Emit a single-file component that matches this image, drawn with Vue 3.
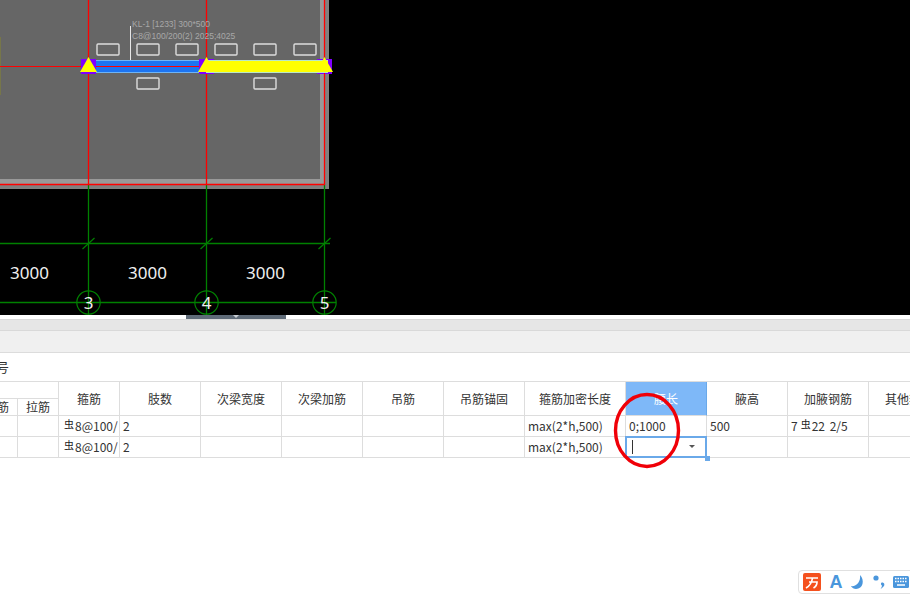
<template>
  <div class="page">
    <!-- drawing canvas -->
    <svg class="canvas" width="910" height="315" viewBox="0 0 910 315">
      <rect x="0" y="0" width="329" height="189" fill="#808080" />
      <rect x="0" y="0" width="324" height="184" fill="#999999" />
      <rect x="0" y="0" width="320" height="179" fill="#666666" />
      <rect x="0" y="37" width="1" height="58" fill="#76764a" />

      <g v-for="x in axes" :key="x">
        <line :x1="x" y1="0" :x2="x" y2="184" stroke="#ff0000" stroke-width="1.3" />
        <line :x1="x" y1="184" :x2="x" y2="315" stroke="#008000" stroke-width="1.3" />
      </g>
      <line x1="0" y1="184.5" x2="325" y2="184.5" stroke="#ff0000" stroke-width="1.3" />
      <line x1="0" y1="243.5" x2="330" y2="243.5" stroke="#008000" stroke-width="1.3" />
      <line x1="0" y1="302.5" x2="336" y2="302.5" stroke="#008000" stroke-width="1.3" />
      <line
        v-for="x in axes"
        :key="'t' + x"
        :x1="x - 6"
        y1="249"
        :x2="x + 6"
        y2="238"
        stroke="#008000"
        stroke-width="1.2"
      />

      <text v-for="x in spans" :key="'s' + x" class="dim" :x="x" y="279">3000</text>
      <g v-for="(x, i) in axes" :key="'c' + x">
        <circle :cx="x" cy="302.5" r="11.7" fill="none" stroke="#008000" stroke-width="1.2" />
        <text class="dim" :x="x" y="309">{{ i + 3 }}</text>
      </g>

      <!-- beams -->
      <rect x="96" y="60" width="110" height="13" fill="#6fb4f5" />
      <rect x="96" y="61" width="110" height="11" fill="#1c74f2" />
      <line x1="0" y1="66.5" x2="206" y2="66.5" stroke="#ff0000" stroke-width="1.2" />
      <rect v-for="b in supports" :key="'p' + b" :x="b - 7.5" y="59" width="15" height="15" fill="#8000ff" />
      <line x1="324.5" y1="59" x2="324.5" y2="74" stroke="#ff0000" />
      <rect x="206" y="60" width="122" height="13" fill="#b8e8c8" />
      <rect x="206" y="61" width="122" height="11" fill="#ffff00" />
      <polygon
        v-for="b in supports"
        :key="'y' + b"
        :points="`${b},57 ${b - 8.5},72 ${b + 8.5},72`"
        fill="#ffff00"
      />

      <rect
        v-for="(r, i) in rebars"
        :key="'r' + i"
        :x="r.x"
        :y="r.y"
        width="22"
        height="11"
        rx="1"
        fill="none"
        stroke="#dddddd"
        stroke-width="1.4"
      />

      <line x1="130.5" y1="26" x2="130.5" y2="60" stroke="#e6e6e6" />
      <text class="note" x="132" y="27">KL-1 [1233] 300*500</text>
      <text class="note" x="132" y="39">C8@100/200(2) 2025;4025</text>
    </svg>

    <div class="splitter"></div>
    <div class="tabs"></div>
    <div class="toolbar"></div>
    <div class="title"><span>号</span></div>

    <div class="table-wrap">
      <table class="grid">
        <colgroup>
          <col v-for="(c, i) in columns" :key="i" :style="{ width: c + 'px' }" />
        </colgroup>
        <thead>
          <tr>
            <th colspan="2"></th>
            <th
              v-for="h in headers"
              :key="h"
              rowspan="2"
              :class="{ active: h === '腰长' }"
            >
              {{ h }}
            </th>
          </tr>
          <tr>
            <th>腰筋</th>
            <th>拉筋</th>
          </tr>
        </thead>
        <tbody>
          <tr v-for="(row, i) in rows" :key="i">
            <td></td>
            <td></td>
            <td><span class="steel">虫</span>8@100/</td>
            <td>2</td>
            <td></td>
            <td></td>
            <td></td>
            <td></td>
            <td>max(2*h,500)</td>
            <td class="edit-host">
              {{ row.len }}
              <div v-if="row.editing" class="editor">
                <i class="caret"></i>
                <i class="arrow"></i>
                <i class="handle"></i>
              </div>
            </td>
            <td>{{ row.high }}</td>
            <td class="bar-cell">
              <template v-if="row.bar">7<span class="steel">虫</span>22 2/5</template>
            </td>
            <td></td>
          </tr>
        </tbody>
      </table>
    </div>

    <!-- collapse handle of the splitter -->
    <div class="collapse"><i></i></div>

    <!-- red hand-drawn mark -->
    <svg class="mark" width="910" height="596" viewBox="0 0 910 596">
      <ellipse cx="647" cy="430.5" rx="31.5" ry="36" fill="none" stroke="#f00008" stroke-width="3.4" />
    </svg>

    <!-- input method bar -->
    <div class="ime">
      <svg width="18" height="18" viewBox="0 0 18 18">
        <rect width="18" height="18" rx="2" fill="#f4511e" />
        <path
          d="M3 5 H15 M6 9 H14 Q14 13 10.5 15 M9.5 5 Q8.5 12 3 15"
          fill="none"
          stroke="#fff"
          stroke-width="1.7"
        />
      </svg>
      <span class="ime-a">A</span>
      <svg width="14" height="14" viewBox="0 0 14 14">
        <path d="M9 0 C14 5 12 14 5 14 C3 14 1 13 0 11 C5 12 10 7 9 0Z" fill="#4a96dc" />
      </svg>
      <svg width="12" height="14" viewBox="0 0 12 14">
        <circle cx="3" cy="3" r="2.6" fill="#4a96dc" />
        <path d="M9 7.5 C11.5 7.5 12 10 10.5 11.5 C9.5 12.8 8.5 13.5 7.5 14 C8.5 12.5 9 11.5 9 10.5 C7.5 10 7.8 7.5 9 7.5Z" fill="#4a96dc" />
      </svg>
      <svg width="16" height="12" viewBox="0 0 16 12">
        <rect width="16" height="12" rx="1.5" fill="#4a96dc" />
        <path
          d="M2 2.5 H14 M2 5.5 H14"
          stroke="#fff"
          stroke-width="1.5"
          stroke-dasharray="1.5 1"
        />
        <path d="M4 9 H12" stroke="#fff" stroke-width="1.5" />
      </svg>
    </div>
  </div>
</template>

<script setup>
const axes = [88.5, 206.5, 324.5];
const spans = [29.5, 147.5, 265.5];
const supports = [88.5, 206.5, 324.5];

const rebars = [
  { x: 97, y: 44 },
  { x: 137, y: 44 },
  { x: 176, y: 44 },
  { x: 215, y: 44 },
  { x: 254, y: 44 },
  { x: 294, y: 44 },
  { x: 137, y: 78 },
  { x: 254, y: 78 },
];

const columns = [41, 41, 61, 81, 81, 81, 81, 81, 101, 81, 81, 81, 81];

const headers = [
  '箍筋',
  '肢数',
  '次梁宽度',
  '次梁加筋',
  '吊筋',
  '吊筋锚固',
  '箍筋加密长度',
  '腰长',
  '腋高',
  '加腋钢筋',
  '其他箍筋',
];

const rows = [
  { len: '0;1000', high: '500', bar: true, editing: false },
  { len: '', high: '', bar: false, editing: true },
];
</script>

<style scoped>
.page {
  position: relative;
  width: 910px;
  height: 596px;
  overflow: hidden;
  background: #fff;
  color: #333;
  font-family: "Noto Sans CJK SC", "Noto Sans", sans-serif;
  font-size: 12px;
}
.canvas {
  display: block;
  background: #000;
}
.dim {
  fill: #f0f0f0;
  font-family: "Noto Sans", sans-serif;
  font-size: 17px;
  text-anchor: middle;
}
.note {
  fill: #a8a8a8;
  font-family: "Liberation Sans", sans-serif;
  font-size: 8.5px;
}
.splitter {
  height: 4px;
  background: #fff;
}
.tabs {
  height: 12px;
  background: #e6e6e6;
  border-top: 1px solid #d9d9d9;
  border-bottom: 1px solid #d9d9d9;
  box-sizing: border-box;
}
.toolbar {
  height: 22px;
  background: #f0f0f0;
  border-bottom: 1px solid #dcdcdc;
  box-sizing: border-box;
}
.title {
  height: 28px;
  line-height: 28px;
  font-size: 13px;
  overflow: hidden;
}
.title span {
  display: inline-block;
  margin-left: -4px;
}
.table-wrap {
  overflow: hidden;
  padding-bottom: 4px;
}
.grid {
  table-layout: fixed;
  width: 973px;
  margin-left: -23px;
  border-collapse: separate;
  border-spacing: 0;
  border-top: 1px solid #ddd;
}
.grid th,
.grid td {
  box-sizing: border-box;
  padding: 0;
  border-right: 1px solid #ddd;
  border-bottom: 1px solid #ddd;
  white-space: nowrap;
  overflow: hidden;
}
.grid th {
  height: 17px;
  line-height: 16px;
  font-weight: 400;
  font-size: 12px;
  text-align: center;
}
.grid td {
  height: 21px;
  line-height: 20px;
  padding-left: 3px;
}
.grid th.active {
  background: #7eb8f8;
  color: #fff;
  border-right-color: #6aa9e9;
}
.bar-cell {
  word-spacing: 2px;
}
.steel {
  display: inline-block;
  font-size: 10px;
  line-height: 10px;
  vertical-align: 3px;
  margin: 0 1px 0 2px;
  color: #222;
}
.bar-cell .steel {
  margin-left: 3px;
}
.edit-host {
  position: relative;
  overflow: visible !important;
}
.editor {
  position: absolute;
  left: -1px;
  top: -1px;
  width: 82px;
  height: 22px;
  box-sizing: border-box;
  border: 2px solid #6aa9e9;
  background: #fff;
}
.caret {
  position: absolute;
  left: 5px;
  top: 2px;
  width: 1px;
  height: 14px;
  background: #333;
}
.arrow {
  position: absolute;
  right: 10px;
  top: 7px;
  border-left: 3px solid transparent;
  border-right: 3px solid transparent;
  border-top: 3px solid #555;
}
.handle {
  position: absolute;
  right: -5px;
  bottom: -5px;
  width: 5px;
  height: 5px;
  background: #6aa9e9;
}
.collapse {
  position: absolute;
  left: 186px;
  top: 315px;
  width: 100px;
  height: 4px;
  background: #5f6b78;
}
.collapse i {
  position: absolute;
  left: 47px;
  top: 0;
  border-left: 3px solid transparent;
  border-right: 3px solid transparent;
  border-top: 3px solid #c8cdd2;
}
.mark {
  position: absolute;
  left: 0;
  top: 0;
  pointer-events: none;
}
.ime {
  position: absolute;
  left: 798px;
  top: 570px;
  width: 130px;
  height: 24px;
  box-sizing: border-box;
  padding-left: 4px;
  display: flex;
  align-items: center;
  gap: 8px;
  background: #fff;
  border: 1px solid #e0e0e0;
  border-radius: 4px;
}
.ime svg {
  flex: none;
  display: block;
}
.ime-a {
  width: 14px;
  text-align: center;
  color: #4a96dc;
  font-family: "Liberation Sans", sans-serif;
  font-weight: 700;
  font-size: 18px;
  line-height: 18px;
}
</style>

<style>
html,
body {
  margin: 0;
  overflow: hidden;
}
</style>
